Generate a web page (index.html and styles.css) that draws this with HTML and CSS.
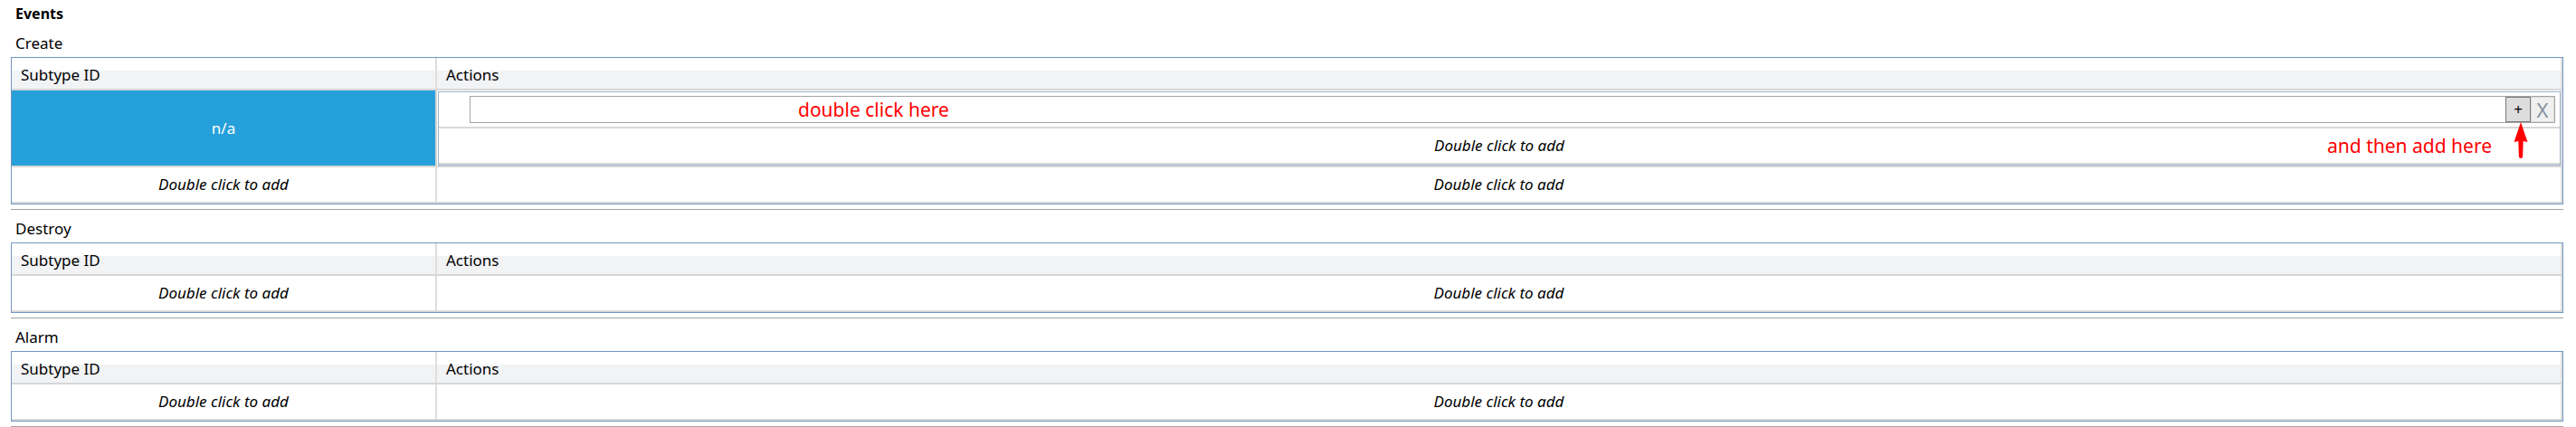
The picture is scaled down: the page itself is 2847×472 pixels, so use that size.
FILE: index.html
```html
<!DOCTYPE html>
<html lang="en">
<head>
<meta charset="utf-8">
<title>Events</title>
<link rel="stylesheet" href="styles.css">
</head>
<body>
<div class="page">
  <div class="title">Events</div>

  <section class="event">
    <div class="label">Create</div>
    <div class="grid">
      <div class="row head">
        <div class="cell">Subtype ID</div>
        <div class="cell">Actions</div>
      </div>
      <div class="row selected">
        <div class="cell sub">n/a</div>
        <div class="cell actions">
          <div class="nested">
            <div class="nrow edit">
              <div class="textbox">
                <span class="note note-edit">double click here</span>
                <button class="btn add">+</button>
                <button class="btn remove">X</button>
              </div>
            </div>
            <div class="nrow addrow">
              Double click to add
              <span class="note note-add">and then add here</span>
            </div>
            <svg class="arrow" width="16" height="41" viewBox="0 0 16 41" aria-hidden="true">
              <path d="M8 0 L15.5 22 L10.7 21 L10.1 38.5 Q8 41.5 5.9 38.5 L5.3 21 L0.5 22 Z" fill="#ff0000"/>
            </svg>
          </div>
        </div>
      </div>
      <div class="row">
        <div class="cell ph">Double click to add</div>
        <div class="cell ph">Double click to add</div>
      </div>
    </div>
  </section>

  <section class="event">
    <div class="label">Destroy</div>
    <div class="grid">
      <div class="row head">
        <div class="cell">Subtype ID</div>
        <div class="cell">Actions</div>
      </div>
      <div class="row">
        <div class="cell ph">Double click to add</div>
        <div class="cell ph">Double click to add</div>
      </div>
    </div>
  </section>

  <section class="event">
    <div class="label">Alarm</div>
    <div class="grid">
      <div class="row head">
        <div class="cell">Subtype ID</div>
        <div class="cell">Actions</div>
      </div>
      <div class="row">
        <div class="cell ph">Double click to add</div>
        <div class="cell ph">Double click to add</div>
      </div>
    </div>
  </section>
</div>
</body>
</html>
```

FILE: styles.css
```css
* { box-sizing: border-box; }

body {
  margin: 0;
  background: #ffffff;
  font-family: "Noto Sans", "Open Sans", sans-serif;
  font-size: 17px;
  color: #000000;
}

.page {
  padding: 0 14px 0 12px;
}

.title {
  font-weight: 700;
  font-size: 16px;
  line-height: 20px;
  padding: 5px 0 2px 5px;
}

.event {
  padding-bottom: 5px;
  border-bottom: 1px solid #a3a3a3;
}

.event:last-child {
  border-bottom-width: 2px;
}

.label {
  line-height: 20px;
  padding: 11px 0 5px 5px;
}

.grid {
  border: 1px solid #7396c2;
}

.row {
  display: grid;
  grid-template-columns: 470px 1fr;
  border-bottom: 2px solid #d7d7d7;
}

.cell {
  border-right: 2px solid #dedede;
}

.head {
  background: linear-gradient(to bottom, #ffffff 0, #ffffff 42%, #f2f3f5 42%, #f2f3f5 100%);
  border-bottom-color: #d6d7d9;
}

.head .cell {
  height: 34px;
  line-height: 20px;
  padding: 9px 10px 5px;
}

.ph {
  height: 38px;
  line-height: 38px;
  text-align: center;
  font-style: italic;
}

.selected .sub {
  background: #26a0da;
  color: #ffffff;
  display: flex;
  align-items: center;
  justify-content: center;
  border-right-color: #d4d4d4;
}

.actions {
  padding: 1px 0 0 1px;
}

.nested {
  position: relative;
  border: 1px solid #9db4cf;
}

.nrow {
  height: 40px;
  border-bottom: 2px solid #d8d8d8;
}

.edit {
  padding: 4px 5px 4px 34px;
}

.textbox {
  position: relative;
  height: 30px;
  border: 1px solid #a5a5a5;
  background: #ffffff;
  display: flex;
  justify-content: flex-end;
}

.btn {
  height: 28px;
  margin: 0;
  padding: 0;
  font-family: "Noto Sans", "Open Sans", sans-serif;
  line-height: 26px;
  text-align: center;
}

.add {
  width: 28px;
  background: #dddddd;
  border: 1px solid #7a7a7a;
  font-size: 17px;
  color: #000000;
}

.remove {
  width: 26px;
  background: #f0f0f0;
  border: 1px solid #dadada;
  font-size: 22px;
  color: #8393a3;
}

.addrow {
  position: relative;
  text-align: center;
  line-height: 38px;
  font-style: italic;
}

.note {
  position: absolute;
  top: 0;
  color: #ff0000;
  font-size: 21px;
  font-style: normal;
  white-space: nowrap;
}

.note-edit {
  left: 362px;
  line-height: 28px;
}

.note-add {
  right: 75px;
  line-height: 38px;
}

.arrow {
  position: absolute;
  top: 33px;
  right: 35px;
  display: block;
}
```
